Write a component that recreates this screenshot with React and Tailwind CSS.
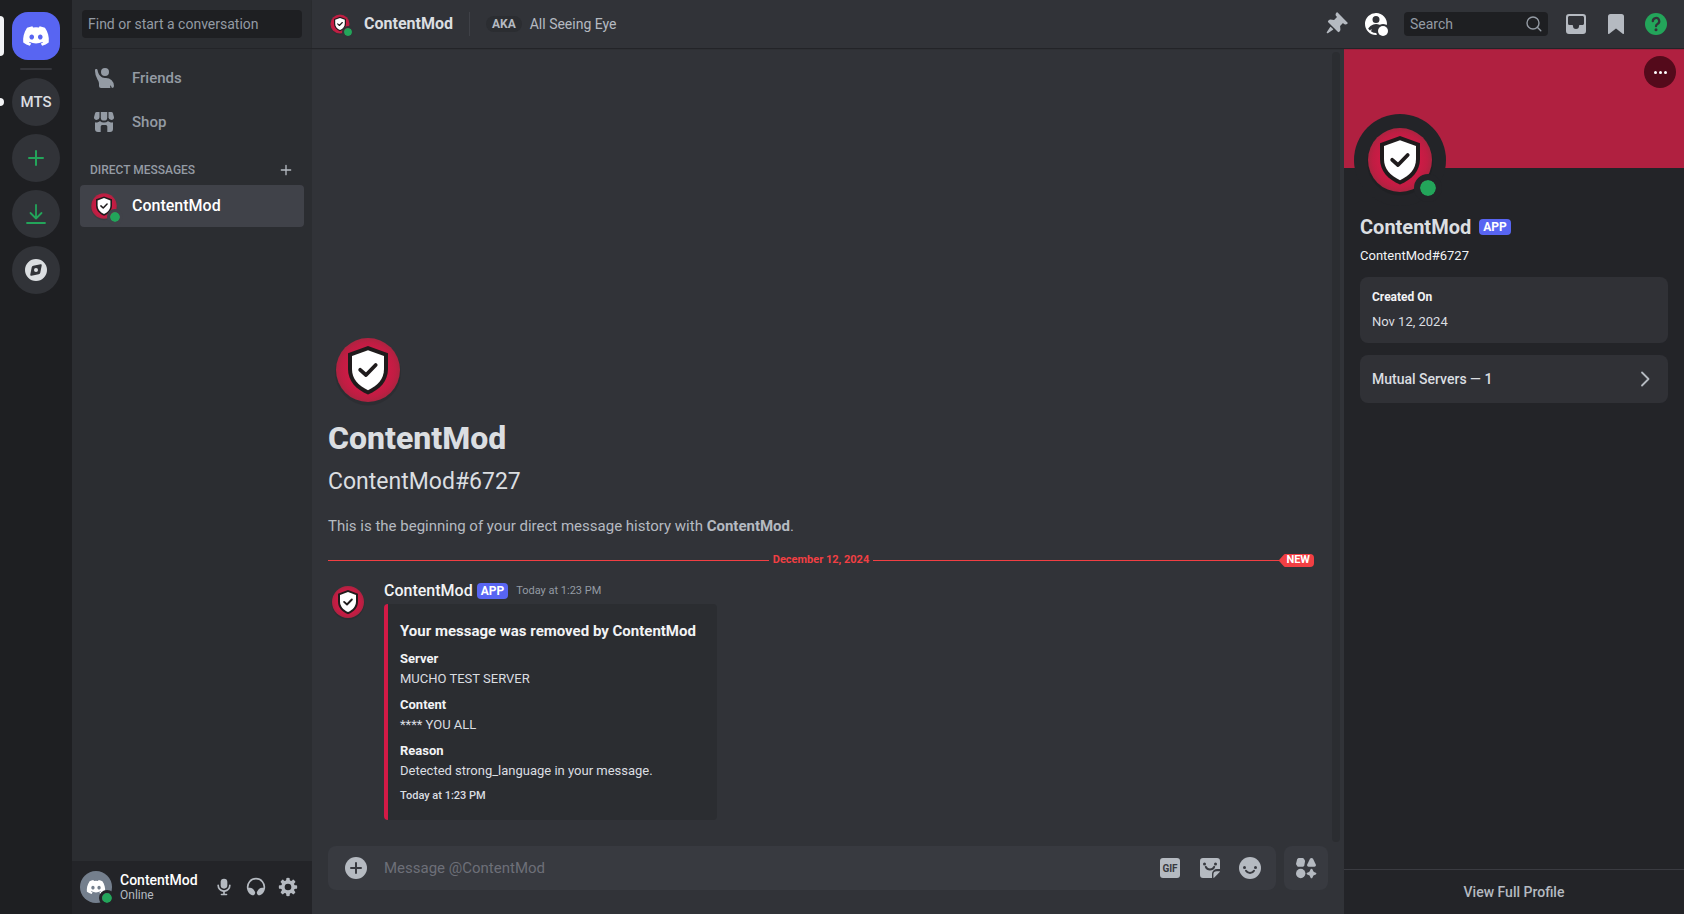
import React, { useId } from "react";
import { FaDiscord } from "react-icons/fa";

function Icon({ className = "size-6", children }) {
  return (
    <svg viewBox="0 0 24 24" className={className} fill="currentColor" aria-hidden="true">
      {children}
    </svg>
  );
}

const PinIcon = () => (
  <Icon>
    <path d="M19.38 11.38a3 3 0 0 0 4.24 0l.03-.03a.5.5 0 0 0 0-.7L13.35.35a.5.5 0 0 0-.7 0l-.03.03a3 3 0 0 0 0 4.24L13 5l-2.92 2.92-3.65-.34a2 2 0 0 0-1.6.58l-.62.63a1 1 0 0 0 0 1.42l9.58 9.58a1 1 0 0 0 1.42 0l.63-.63a2 2 0 0 0 .58-1.6l-.34-3.64L19 11zM9.07 17.07a.5.5 0 0 1-.08.77l-5.15 3.43a.5.5 0 0 1-.63-.06l-.42-.42a.5.5 0 0 1-.06-.63L6.16 15a.5.5 0 0 1 .77-.08l2.14 2.14Z" />
  </Icon>
);

const ProfileIcon = () => (
  <Icon>
    <path
      fillRule="evenodd"
      d="M23 12.38c-.02.38-.45.58-.78.4a6.97 6.97 0 0 0-6.27-.08.54.54 0 0 1-.44 0 8.97 8.97 0 0 0-11.16 3.55c-.1.15-.1.35 0 .5.37.58.8 1.13 1.28 1.61.24.24.64.15.8-.15.19-.38.39-.73.58-1.02.14-.21.43-.1.4.15l-.19 1.96c-.02.19.07.37.23.47A8.96 8.96 0 0 0 12 21a.4.4 0 0 1 .38.27c.1.33.25.65.4.95.18.34-.02.76-.4.77L12 23a11 11 0 1 1 11-10.62ZM15.5 7.5a3.5 3.5 0 1 1-7 0 3.5 3.5 0 0 1 7 0Z"
    />
    <circle cx="19" cy="19" r="5" />
  </Icon>
);

const InboxIcon = () => (
  <Icon>
    <path
      fillRule="evenodd"
      d="M5 2a3 3 0 0 0-3 3v14a3 3 0 0 0 3 3h14a3 3 0 0 0 3-3V5a3 3 0 0 0-3-3H5ZM4 5.5C4 4.67 4.67 4 5.5 4h13c.83 0 1.5.67 1.5 1.5v6c0 .83-.67 1.5-1.5 1.5h-2.65c-.5 0-.85.5-.85 1a3 3 0 1 1-6 0c0-.5-.35-1-.85-1H5.5A1.5 1.5 0 0 1 4 11.5v-6Z"
    />
  </Icon>
);

const BookmarkIcon = () => (
  <Icon>
    <path d="M6.5 2h11A2.5 2.5 0 0 1 20 4.5v16.7a.8.8 0 0 1-1.3.6L12 16.5l-6.7 5.3a.8.8 0 0 1-1.3-.6V4.5A2.5 2.5 0 0 1 6.5 2Z" />
  </Icon>
);

const HelpIcon = () => (
  <Icon>
    <circle cx="12" cy="12" r="11" />
    <path
      d="M8.8 9.2a3.2 3.2 0 1 1 4.7 2.8c-1 .6-1.5 1.1-1.5 2.2"
      fill="none"
      stroke="#313338"
      strokeWidth="2.3"
      strokeLinecap="round"
    />
    <circle cx="12" cy="17.7" r="1.5" fill="#313338" />
  </Icon>
);

const SearchIcon = () => (
  <svg viewBox="0 0 16 16" className="size-4 shrink-0" fill="none" stroke="currentColor" strokeWidth="1.4" strokeLinecap="round" aria-hidden="true">
    <circle cx="7" cy="7" r="6" />
    <path d="M11.3 11.3 14.8 14.8" />
  </svg>
);

const FriendsIcon = () => (
  <Icon>
    <path d="M13 10a4 4 0 1 0 0-8 4 4 0 0 0 0 8Z" />
    <path d="M3 5v-.75C3 3.56 3.56 3 4.25 3s1.24.56 1.33 1.25C6.12 8.65 9.46 12 13 12h1a8 8 0 0 1 8 8 2 2 0 0 1-2 2 .21.21 0 0 1-.2-.15 7.65 7.65 0 0 0-1.32-2.3c-.15-.2-.42-.06-.39.17l.25 2c.02.15-.1.28-.25.28H9a2 2 0 0 1-2-2v-2.22c0-1.57-.67-3.05-1.53-4.37A15.85 15.85 0 0 1 3 5Z" />
  </Icon>
);

const ShopIcon = () => (
  <Icon>
    <path d="M4.8 2H7.5v5.2a2.9 2.9 0 0 1-5.5 1.1V7.2L3 3.4A1.9 1.9 0 0 1 4.8 2Z" />
    <path d="M8.8 2h6.4v5.4a3.2 3.2 0 0 1-6.4 0Z" />
    <path d="M16.5 2h2.7A1.9 1.9 0 0 1 21 3.4l1 3.8v1.1a2.9 2.9 0 0 1-5.500-1.100Z" />
    <path d="M3 12.2c1.7.5 3.6 0 4.9-1.3a5.9 5.9 0 0 0 8.2 0c1.3 1.3 3.2 1.8 4.9 1.3V19a3 3 0 0 1-3 3h-2.700v-5.500A1.500 1.500 0 0 0 13.800 15h-3.600a1.500 1.500 0 0 0-1.500 1.500V22H6a3 3 0 0 1-3-3Z" />
  </Icon>
);

const MicIcon = () => (
  <Icon className="size-5">
    <path d="M12 2a4 4 0 0 0-4 4v4a4 4 0 0 0 8 0V6a4 4 0 0 0-4-4Z" />
    <path d="M6 10a1 1 0 0 0-2 0 8 8 0 0 0 7 7.94V20H9a1 1 0 1 0 0 2h6a1 1 0 1 0 0-2h-2v-2.06A8 8 0 0 0 20 10a1 1 0 1 0-2 0 6 6 0 0 1-12 0Z" />
  </Icon>
);

const HeadphonesIcon = () => (
  <Icon className="size-5">
    <path d="M12 3a9 9 0 0 0-8.95 10h1.87a5 5 0 0 1 4.1 2.13l1.37 1.97a3.1 3.1 0 0 1-.17 3.78 2.85 2.85 0 0 1-3.55.74 11 11 0 1 1 10.66 0c-1.27.71-2.73.23-3.55-.74a3.1 3.1 0 0 1-.17-3.78l1.38-1.97a5 5 0 0 1 4.1-2.13h1.86A9 9 0 0 0 12 3Z" />
  </Icon>
);

const SettingsIcon = () => (
  <Icon className="size-5">
    <path
      fillRule="evenodd"
      d="M10.56 1.1c-.46.05-.7.53-.64.98.18 1.16-.19 2.2-.98 2.53-.8.33-1.79-.15-2.49-1.1-.27-.36-.78-.52-1.14-.24-.77.59-1.45 1.27-2.04 2.04-.28.36-.12.87.24 1.14.96.7 1.43 1.7 1.1 2.49-.33.8-1.37 1.16-2.53.98-.45-.07-.93.18-.99.64a11.1 11.1 0 0 0 0 2.88c.06.46.54.7.99.64 1.16-.18 2.2.19 2.53.98.33.8-.14 1.79-1.1 2.49-.36.27-.52.78-.24 1.14.59.77 1.27 1.45 2.04 2.04.36.28.87.12 1.14-.24.7-.95 1.7-1.43 2.49-1.1.8.33 1.16 1.37.98 2.53-.07.45.18.93.64.99a11.1 11.1 0 0 0 2.88 0c.46-.06.7-.54.64-.99-.18-1.16.19-2.2.98-2.53.8-.33 1.79.14 2.49 1.1.27.36.78.52 1.14.24.77-.59 1.45-1.27 2.04-2.04.28-.36.12-.87-.24-1.14-.96-.7-1.43-1.7-1.1-2.49.33-.8 1.37-1.16 2.53-.98.45.07.93-.18.99-.64a11.1 11.1 0 0 0 0-2.88c-.06-.46-.54-.7-.99-.64-1.16.18-2.2-.19-2.53-.98-.33-.8.14-1.79 1.1-2.49.36-.27.52-.78.24-1.14a11.07 11.07 0 0 0-2.04-2.04c-.36-.28-.87-.12-1.14.24-.7.96-1.7 1.43-2.49 1.1-.8-.33-1.16-1.37-.98-2.53.07-.45-.18-.93-.64-.99a11.1 11.1 0 0 0-2.88 0ZM16 12a4 4 0 1 1-8 0 4 4 0 0 1 8 0Z"
    />
  </Icon>
);

const CompassIcon = () => (
  <Icon>
    <path
      fillRule="evenodd"
      d="M23 12a11 11 0 1 1-22 0 11 11 0 0 1 22 0ZM7.74 9.3A2 2 0 0 1 9.3 7.74l7.22-1.45a1 1 0 0 1 1.18 1.18l-1.44 7.22a2 2 0 0 1-1.57 1.57l-7.22 1.45a1 1 0 0 1-1.18-1.18L7.74 9.3Z"
    />
    <circle cx="12" cy="12" r="2" />
  </Icon>
);

const PlusIcon = ({ className }) => (
  <svg viewBox="0 0 24 24" className={className} fill="none" stroke="currentColor" strokeWidth="2" strokeLinecap="round" aria-hidden="true">
    <path d="M12 5v14M5 12h14" />
  </svg>
);

const DownloadIcon = () => (
  <svg viewBox="0 0 24 24" className="size-6" fill="none" stroke="currentColor" strokeWidth="1.8" strokeLinecap="round" strokeLinejoin="round" aria-hidden="true">
    <path d="M12 3v13M6.5 11 12 16.5l5.5-5.5M3 21h18" />
  </svg>
);

const AttachIcon = () => (
  <Icon>
    <circle cx="12" cy="12" r="11" />
    <path d="M12 7v10M7 12h10" stroke="#383a40" strokeWidth="2" strokeLinecap="round" />
  </Icon>
);

const StickerIcon = () => (
  <Icon>
    <path d="M5 2h14a3 3 0 0 1 3 3v8h-3a5 5 0 0 0-5 5v4H5a3 3 0 0 1-3-3V5a3 3 0 0 1 3-3Z" />
    <path d="M22 15.2c-.1.5-.4 1-.8 1.4l-4.6 4.6c-.4.4-.8.6-1.2.7V18.5a3.3 3.3 0 0 1 3.3-3.3Z" />
    <g fill="#383a40">
      <circle cx="6.5" cy="8" r="1.5" />
      <circle cx="17.5" cy="8" r="1.5" />
    </g>
    <path d="M7.8 10.8a4.6 4.6 0 0 0 8.4 0" fill="none" stroke="#383a40" strokeWidth="2" strokeLinecap="round" />
  </Icon>
);

const EmojiIcon = () => (
  <Icon>
    <circle cx="12" cy="12" r="11" />
    <g fill="#383a40">
      <circle cx="6.5" cy="11.5" r="1.5" />
      <circle cx="17.5" cy="11.5" r="1.5" />
    </g>
    <path d="M8 14.8a4.7 4.7 0 0 0 8 0" fill="none" stroke="#383a40" strokeWidth="2" strokeLinecap="round" />
  </Icon>
);

const AppsIcon = () => (
  <Icon>
    <path d="M5.4 2h3.2c.5 0 1 .3 1.3.7l.9 1.6c.3.4.3.9.2 1.3l-.7 4c-.1.7-.7 1.2-1.4 1.2H4.5c-.5 0-1-.2-1.2-.6L2.2 8.6a1.600 1.600 0 0 1-.1-1.100l.9-3.800C3.200 2.700 4.200 2 5.400 2Z" />
    <path d="M16 2.800a1.700 1.700 0 0 1 3 0l2.800 5.600a1.700 1.700 0 0 1-1.500 2.400h-5.600a1.700 1.700 0 0 1-1.500-2.400Z" />
    <circle cx="6.700" cy="17.500" r="4.700" />
    <path d="M16.600 13.300a1 1 0 0 1 1.800 0l.8 1.800c.2.400.4.700.8.800l1.800.8a1 1 0 0 1 0 1.800l-1.800.8c-.4.200-.7.400-.8.800l-.8 1.600a1 1 0 0 1-1.800 0l-.8-1.600c-.2-.4-.4-.7-.8-.8l-1.800-.8a1 1 0 0 1 0-1.800l1.800-.8c.4-.2.700-.4.800-.8Z" />
  </Icon>
);

function ShieldAvatar({ className }) {
  const id = useId();
  return (
    <svg viewBox="0 0 80 80" className={className} role="img" aria-label="ContentMod">
      <defs>
        <radialGradient id={id} cx="50%" cy="50%" r="50%">
          <stop offset="0.5" stopColor="#d31a46" />
          <stop offset="0.85" stopColor="#c01d43" />
          <stop offset="1" stopColor="#ab2440" />
        </radialGradient>
      </defs>
      <circle cx="40" cy="42.5" r="33" fill="#000" opacity="0.1" />
      <circle cx="40" cy="40" r="32" fill={`url(#${id})`} />
      <path d="M40 16 60 23.3V39c0 12-8 20.5-20 25.5C28 59.5 20 51 20 39V23.3Z" fill="#1f1b1c" />
      <path d="M40 20.2 56 26v13c0 9.5-6 16.5-16 21.2C30 55.5 24 48.5 24 39V26Z" fill="#fff" />
      <path d="M32.2 39.8 38 45l9.7-10" fill="none" stroke="#1f1b1c" strokeWidth="3.8" strokeLinecap="round" strokeLinejoin="round" />
    </svg>
  );
}

function AppTag() {
  return (
    <span className="flex h-4 items-center rounded-[4px] bg-[#5865f2] px-1 text-xs font-bold text-white">APP</span>
  );
}

function RailButton({ label, className = "text-[#23a55a]", children }) {
  return (
    <button
      type="button"
      aria-label={label}
      className={"flex size-12 items-center justify-center rounded-full bg-[#313338] " + className}
    >
      {children}
    </button>
  );
}

function ServerRail() {
  return (
    <nav aria-label="Servers" className="flex w-[72px] shrink-0 flex-col items-center gap-2 bg-[#1e1f22] pt-3">
      <div className="relative flex w-full justify-center">
        <span className="absolute top-1 left-0 h-10 w-1 rounded-r-[4px] bg-[#f2f3f5]" />
        <button
          type="button"
          aria-label="Direct Messages"
          className="flex size-12 items-center justify-center rounded-2xl bg-[#5865f2] text-white"
        >
          <FaDiscord className="size-7" />
        </button>
      </div>
      <div className="h-[2px] w-8 rounded-[1px] bg-[#35363c]" />
      <div className="relative flex w-full justify-center">
        <span className="absolute top-5 left-0 h-2 w-1 rounded-r-[4px] bg-[#f2f3f5]" />
        <RailButton label="MTS server" className="text-[15px] font-medium text-[#dbdee1]">
          MTS
        </RailButton>
      </div>
      <RailButton label="Add a Server">
        <PlusIcon className="size-6" />
      </RailButton>
      <RailButton label="Download Apps">
        <DownloadIcon />
      </RailButton>
      <RailButton label="Discover" className="text-[#dbdee1]">
        <CompassIcon />
      </RailButton>
    </nav>
  );
}

function StatusDot({ className }) {
  return <span className={"absolute box-content rounded-full bg-[#23a55a] bg-clip-padding " + className} />;
}

function NavLink({ icon, children }) {
  return (
    <a href="#" className="flex h-[42px] items-center gap-3 rounded-[4px] px-2 text-[15px] font-medium text-[#949ba4]">
      <span className="flex w-8 justify-center">{icon}</span>
      {children}
    </a>
  );
}

function Sidebar() {
  return (
    <aside className="flex w-60 shrink-0 flex-col bg-[#2b2d31]">
      <div className="flex h-[49px] shrink-0 items-center border-b border-[#232428] px-[10px]">
        <button type="button" className="h-7 w-full rounded-[4px] bg-[#1e1f22] px-[6px] text-left text-sm text-[#949ba4]">
          Find or start a conversation
        </button>
      </div>
      <div className="flex flex-1 flex-col gap-[2px] p-2">
        <NavLink icon={<FriendsIcon />}>Friends</NavLink>
        <NavLink icon={<ShopIcon />}>Shop</NavLink>
        <div className="flex h-[38px] items-center justify-between pt-3 pr-[10px] pl-[10px] text-[#949ba4]">
          <h2 className="text-[12px] font-medium">DIRECT MESSAGES</h2>
          <button type="button" aria-label="Create DM" className="text-[#b5bac1]">
            <PlusIcon className="size-4" />
          </button>
        </div>
        <a href="#" className="flex h-[42px] items-center gap-3 rounded-[4px] bg-[#404249] px-2 text-base font-medium text-white">
          <span className="relative">
            <ShieldAvatar className="size-8" />
            <StatusDot className="-right-[3px] -bottom-[3px] size-[10px] border-3 border-[#404249]" />
          </span>
          ContentMod
        </a>
      </div>
      <div className="flex h-[53px] shrink-0 items-center bg-[#232428] px-2 pb-px">
        <div className="relative flex size-8 items-center justify-center rounded-full bg-[#747f8d] text-white">
          <FaDiscord className="size-5" />
          <StatusDot className="-right-[3px] -bottom-[3px] size-[10px] border-3 border-[#232428]" />
        </div>
        <div className="ml-2 flex-1">
          <div className="text-[14px] leading-4 font-medium text-white">ContentMod</div>
          <div className="text-[12px] leading-[14px] text-[#b5bac1]">Online</div>
        </div>
        <div className="flex text-[#b5bac1]">
          <button type="button" aria-label="Mute" className="flex size-8 items-center justify-center">
            <MicIcon />
          </button>
          <button type="button" aria-label="Deafen" className="flex size-8 items-center justify-center">
            <HeadphonesIcon />
          </button>
          <button type="button" aria-label="User Settings" className="flex size-8 items-center justify-center">
            <SettingsIcon />
          </button>
        </div>
      </div>
    </aside>
  );
}

function Header() {
  return (
    <header className="z-10 flex h-12 shrink-0 items-center bg-[#313338] px-4 shadow-[0_1px_1px_#232428]">
      <span className="relative">
        <ShieldAvatar className="size-6" />
        <StatusDot className="-right-[2px] -bottom-[2px] size-2 border-2 border-[#313338]" />
      </span>
      <h1 className="ml-3 text-base font-bold text-[#dbdee1]">ContentMod</h1>
      <span className="mx-4 h-6 w-px bg-[#3f4147]" />
      <span className="flex h-4 items-center rounded-full bg-[#2b2d31] px-[6px] text-xs font-bold text-[#b5bac1]">AKA</span>
      <span className="ml-2 text-sm text-[#b5bac1]">All Seeing Eye</span>
      <div className="ml-auto flex items-center gap-4 text-[#b5bac1]">
        <button type="button" aria-label="Pinned Messages">
          <PinIcon />
        </button>
        <button type="button" aria-label="Hide User Profile" className="text-white">
          <ProfileIcon />
        </button>
        <label className="flex h-6 w-36 items-center rounded-[4px] bg-[#1e1f22] px-[6px] text-[#949ba4]">
          <input
            type="text"
            aria-label="Search"
            placeholder="Search"
            className="w-full min-w-0 bg-transparent text-sm outline-none placeholder:text-[#949ba4]"
          />
          <SearchIcon />
        </label>
        <button type="button" aria-label="Inbox">
          <InboxIcon />
        </button>
        <button type="button" aria-label="Bookmarks">
          <BookmarkIcon />
        </button>
        <button type="button" aria-label="Help" className="text-[#23a55a]">
          <HelpIcon />
        </button>
      </div>
    </header>
  );
}

const fields = [
  ["Server", "MUCHO TEST SERVER"],
  ["Content", "**** YOU ALL"],
  ["Reason", "Detected strong_language in your message."],
];

function Message() {
  return (
    <article className="mt-3 flex gap-4">
      <ShieldAvatar className="mt-[2px] size-10" />
      <div>
        <div className="flex h-[22px] items-center gap-1">
          <span className="text-base font-medium text-[#f2f3f5]">ContentMod</span>
          <AppTag />
          <time className="ml-1 text-[11px] text-[#949ba4]">Today at 1:23 PM</time>
        </div>
        <div className="mt-[2px] min-w-[333px] rounded-[4px] border-l-4 border-[#d31a46] bg-[#2b2d31] py-4 pr-4 pl-3 text-[13px] text-[#dbdee1]">
          <h3 className="text-[15px] leading-[22px] font-bold text-[#f2f3f5]">Your message was removed by ContentMod</h3>
          <dl>
            {fields.map(([name, value]) => (
              <div key={name} className="mt-2">
                <dt className="leading-[18px] font-bold text-[#f2f3f5]">{name}</dt>
                <dd className="mt-[2px] leading-[18px]">{value}</dd>
              </div>
            ))}
          </dl>
          <div className="mt-2 text-[11px] leading-4 font-medium">Today at 1:23 PM</div>
        </div>
      </div>
    </article>
  );
}

function NewDivider() {
  return (
    <div className="relative mt-[14px] flex h-4 items-center text-[#f23f43]">
      <span className="h-px flex-1 bg-[#f23f43]" />
      <span className="px-1 text-[11px] font-bold">December 12, 2024</span>
      <span className="h-px flex-1 bg-[#f23f43]" />
      <span className="absolute right-0 flex items-center">
        <svg viewBox="0 0 6 13" className="h-[13px] w-[6px]" fill="currentColor" aria-hidden="true">
          <path d="M6 0 5 .5.5 5.5a1.500 1.500 0 0 0 0 2L5 12.500 6 13Z" />
        </svg>
        <span className="flex h-[13px] items-center rounded-r-[4px] bg-[#f23f43] pr-1 pl-px text-[11px] font-bold text-white">
          NEW
        </span>
      </span>
    </div>
  );
}

function Composer() {
  return (
    <form className="flex shrink-0 gap-2 px-4 pb-6" onSubmit={(e) => e.preventDefault()}>
      <div className="flex h-11 flex-1 items-center rounded-lg bg-[#383a40] pr-[14px] pl-4 text-[#b5bac1]">
        <button type="button" aria-label="Add attachment">
          <AttachIcon />
        </button>
        <input
          type="text"
          aria-label="Message @ContentMod"
          placeholder="Message @ContentMod"
          className="ml-4 min-w-0 flex-1 bg-transparent text-[15px] outline-none placeholder:text-[#6d6f78]"
        />
        <div className="flex items-center gap-4">
          <button
            type="button"
            aria-label="GIF picker"
            className="mx-[2px] flex size-5 items-center justify-center rounded-[3px] bg-[#b5bac1] text-[10px] font-bold text-[#383a40]"
          >
            GIF
          </button>
          <button type="button" aria-label="Sticker picker">
            <StickerIcon />
          </button>
          <button type="button" aria-label="Emoji picker">
            <EmojiIcon />
          </button>
        </div>
      </div>
      <button
        type="button"
        aria-label="Apps"
        className="flex size-11 items-center justify-center rounded-lg bg-[#383a40] text-[#b5bac1]"
      >
        <AppsIcon />
      </button>
    </form>
  );
}

function Conversation() {
  return (
    <main className="flex min-w-0 flex-1 flex-col bg-[#313338]">
      <div className="flex min-h-0 flex-1">
        <div className="flex min-w-0 flex-1 flex-col justify-end pr-[18px] pb-[26px] pl-4">
          <ShieldAvatar className="size-20" />
          <h2 className="mt-2 text-[32px] leading-10 font-extrabold text-[#dbdee1]">ContentMod</h2>
          <p className="mt-[10px] text-[23px] leading-7 text-[#dbdee1]">ContentMod#6727</p>
          <p className="mt-[18px] text-[15px] leading-6 text-[#b5bac1]">
            This is the beginning of your direct message history with <strong className="font-bold">ContentMod</strong>.
          </p>
          <NewDivider />
          <Message />
        </div>
        <div className="mt-1 mr-1 mb-1 w-2 rounded-full bg-[#2b2d31]" />
      </div>
      <Composer />
    </main>
  );
}

function ProfilePanel() {
  return (
    <aside aria-label="User profile" className="flex w-[340px] shrink-0 flex-col bg-[#232428] text-[#dbdee1]">
      <div className="relative h-[120px] shrink-0 bg-[#b02040]">
        <button
          type="button"
          aria-label="More"
          className="absolute top-2 right-2 flex size-8 items-center justify-center gap-[2px] rounded-full bg-[#540a1b]"
        >
          <span className="size-[3px] rounded-full bg-white" />
          <span className="size-[3px] rounded-full bg-white" />
          <span className="size-[3px] rounded-full bg-white" />
        </button>
        <div className="absolute top-[66px] left-[10px] rounded-full bg-[#232428] p-[6px]">
          <ShieldAvatar className="size-20" />
          <StatusDot className="right-[4px] bottom-[4px] size-4 border-6 border-[#232428]" />
        </div>
      </div>
      <div className="flex flex-1 flex-col px-4 pt-[47px]">
        <div className="flex h-6 items-center gap-2">
          <h2 className="text-xl font-bold">ContentMod</h2>
          <AppTag />
        </div>
        <p className="mt-2 text-[13px] leading-[18px] text-[#f2f3f5]">ContentMod#6727</p>
        <section className="mt-3 rounded-lg bg-[#303136] p-3">
          <h3 className="text-[12px] leading-4 font-bold text-[#f2f3f5]">Created On</h3>
          <p className="mt-2 text-[13px] leading-[18px]">Nov 12, 2024</p>
        </section>
        <button type="button" className="mt-3 flex h-12 items-center justify-between rounded-lg bg-[#303136] pr-4 pl-3 text-sm font-medium">
          Mutual Servers — 1
          <svg viewBox="0 0 14 16" className="h-4 w-[14px] text-[#b5bac1]" fill="none" stroke="currentColor" strokeWidth="1.8" strokeLinecap="round" strokeLinejoin="round" aria-hidden="true">
            <path d="M4 1.5 10.5 8 4 14.5" />
          </svg>
        </button>
      </div>
      <div className="flex h-[45px] shrink-0 items-center justify-center border-t border-[#3a3b41]">
        <button type="button" className="text-sm font-medium text-[#b5bac1]">
          View Full Profile
        </button>
      </div>
    </aside>
  );
}

export default function App() {
  return (
    <div className="flex h-screen bg-[#313338] font-['Roboto',sans-serif]">
      <ServerRail />
      <Sidebar />
      <div className="flex min-w-0 flex-1 flex-col">
        <Header />
        <div className="flex min-h-0 flex-1">
          <Conversation />
          <ProfilePanel />
        </div>
      </div>
    </div>
  );
}
